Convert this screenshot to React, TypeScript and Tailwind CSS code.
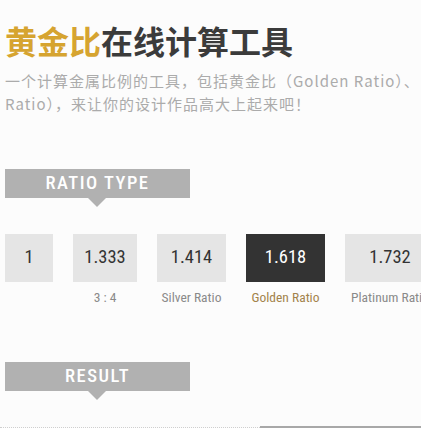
const cond = "font-['Roboto_Condensed','DejaVu_Sans_Condensed',sans-serif]"

const ratios = [
  { value: '1', label: '', w: 'w-[48px]' },
  { value: '1.333', label: '3 : 4', w: 'w-[64px]' },
  { value: '1.414', label: 'Silver Ratio', w: 'w-[69px]' },
  { value: '1.618', label: 'Golden Ratio', w: 'w-[79px]', active: true },
  { value: '1.732', label: 'Platinum Ratio', w: 'w-[90px]' },
]

function Banner({ title }: { title: string }) {
  return (
    <div className="relative ml-[5px] flex h-[29px] w-[185px] items-center justify-center bg-[#b1b1b1]">
      <span className={`${cond} text-[18.5px] font-medium leading-none tracking-[1.5px] text-white`}>{title}</span>
      <div className="absolute left-[83px] top-[29px] h-0 w-0 border-l-[9px] border-r-[9px] border-t-[9px] border-l-transparent border-r-transparent border-t-[#b1b1b1]" />
    </div>
  )
}

export default function App() {
  return (
    <div className="h-[428px] w-[421px] overflow-hidden bg-[#fcfcfc] font-['Noto_Sans_CJK_SC',sans-serif]">
      <h1 className="whitespace-nowrap pl-[5px] pt-[20px] text-[32px] font-bold leading-[40px] text-[#3b3b3b]">
        <span className="text-[#d6a430]">黄金比</span>在线计算工具
      </h1>

      <div className="mt-[9px] whitespace-nowrap pl-[5px] text-[15px] leading-[23px] tracking-[1px] text-[#ababab]">
        <p>一个计算金属比例的工具，包括黄金比（Golden Ratio）、</p>
        <p>Ratio），来让你的设计作品高大上起来吧！</p>
      </div>

      <div className="mt-[54px]">
        <Banner title="RATIO TYPE" />
      </div>

      <div className="mt-[36px] flex gap-5 pl-[5px]">
        {ratios.map((r) => (
          <div key={r.value} className={`${r.w} flex shrink-0 flex-col items-center`}>
            <div
              className={`flex h-[48px] w-full items-center justify-center ${cond} text-[18.5px] ${
                r.active ? 'bg-[#333333] text-white' : 'bg-[#e5e5e5] text-[#333333]'
              }`}
            >
              {r.value}
            </div>
            <div
              className={`mt-[7px] h-[16px] whitespace-nowrap ${cond} text-[13.5px] leading-[16px] ${
                r.active ? 'text-[#a3834b]' : 'text-[#8a8a8a]'
              }`}
            >
              {r.label}
            </div>
          </div>
        ))}
      </div>

      <div className="mt-[57px]">
        <Banner title="RESULT" />
      </div>

      <div className="mt-[35px] flex items-end">
        <div className="w-[260px] border-t border-dotted border-[#cfcfcf]" />
        <div className="flex-1 border-t-2 border-[#a8a8a8]" />
      </div>
    </div>
  )
}
